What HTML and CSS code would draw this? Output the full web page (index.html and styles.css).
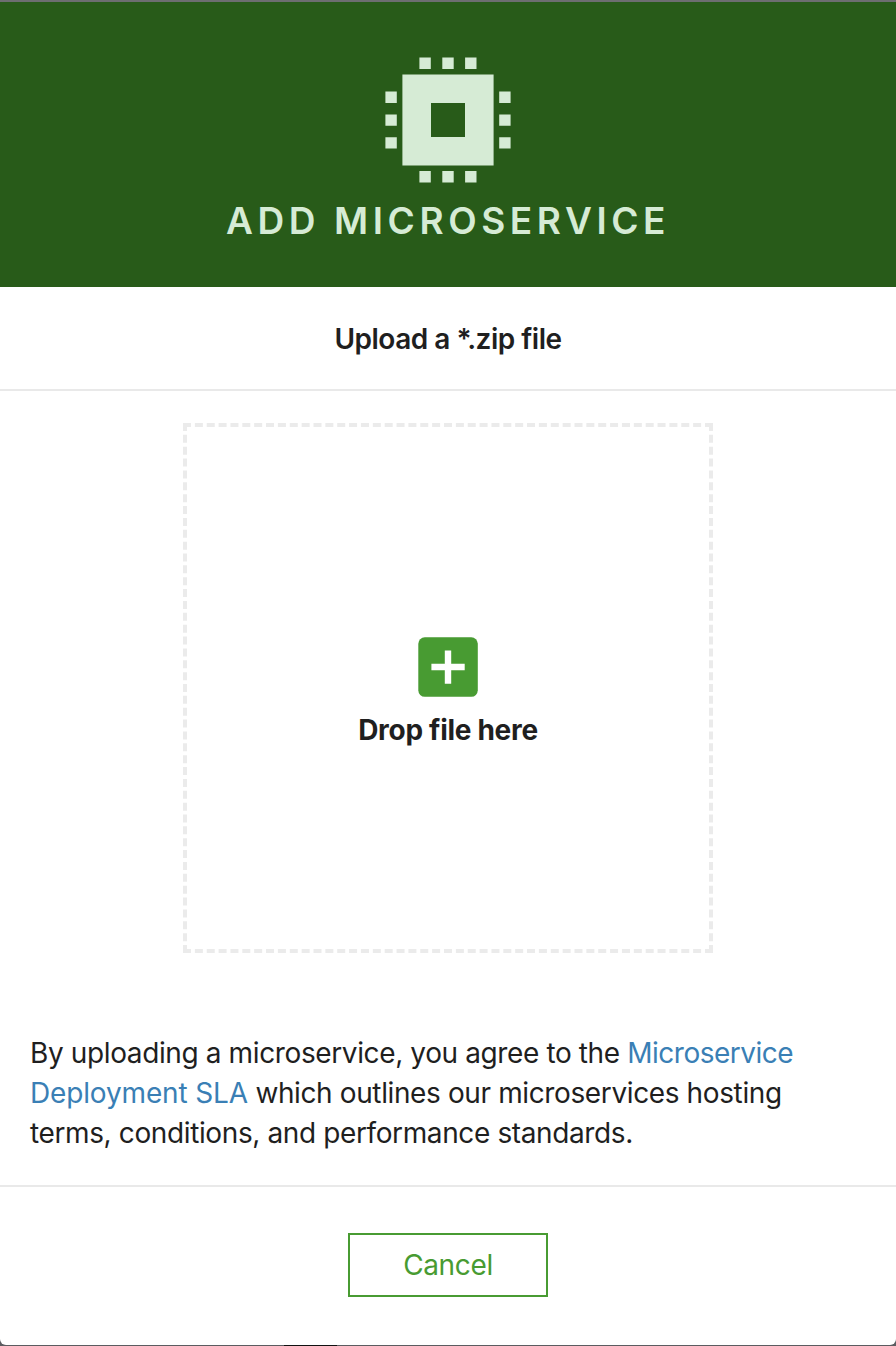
FILE: index.html
```html
<!DOCTYPE html>
<html lang="en">
<head>
<meta charset="utf-8">
<title>Add microservice</title>
<link rel="stylesheet" href="styles.css">
</head>
<body>
<main class="modal">
  <header class="modal-header">
    <svg class="chip-icon" viewBox="0 0 126 126" aria-hidden="true">
      <path fill-rule="evenodd" d="M17.4 17.4h91.2v91.2H17.4zM46 46v34h34V46z"/>
      <path d="M34.4.5h11.4v11.4H34.4zM57.3.5h11.4v11.4H57.3zM80.1.5h11.4v11.4H80.1zM34.4 114.1h11.4v11.4H34.4zM57.3 114.1h11.4v11.4H57.3zM80.1 114.1h11.4v11.4H80.1zM.4 34.6h11.4V46H.4zM.4 57.4h11.4v11.4H.4zM.4 80.2h11.4v11.4H.4zM114.2 34.6h11.4V46h-11.4zM114.2 57.4h11.4v11.4h-11.4zM114.2 80.2h11.4v11.4h-11.4z"/>
    </svg>
    <h1 class="modal-title">ADD MICROSERVICE</h1>
  </header>
  <h2 class="subtitle">Upload a *.zip file</h2>
  <section class="content">
    <div class="dropzone">
      <svg class="plus-icon" viewBox="0 0 60 60" aria-hidden="true">
        <rect class="plus-box" x=".3" y=".3" width="59.5" height="59.5" rx="6.5"/>
        <path class="plus-sign" d="M26.8 13.4h6.4v13.4h13.5v6.4H33.2v13.5h-6.4V33.2H13.4v-6.4h13.4z"/>
      </svg>
      <span class="drop-label">Drop file here</span>
    </div>
    <p class="terms"><span class="line">By uploading a microservice, you agree to the <a class="link link-tight">Microservice</a></span> <span class="line"><a class="link link-loose">Deployment SLA</a> which outlines our microservices hosting</span> <span class="line">terms, conditions, and performance standards.</span></p>
  </section>
  <footer class="modal-footer">
    <button class="cancel" type="button">Cancel</button>
  </footer>
</main>
<div class="backdrop-mark"></div>
</body>
</html>
```
FILE: styles.css
```css
* { box-sizing: border-box; }
body {
  margin: 0;
  height: 1346px;
  padding: 2px 0 1px;
  background: linear-gradient(#6d6e71 0 50%, #5b5c60 50%);
  color: #1f1f1f;
  font-family: Inter, "Liberation Sans", sans-serif;
  font-size: 28px;
  overflow: hidden;
}
.modal {
  height: 1343px;
  display: flex;
  flex-direction: column;
  background: #fff;
  border-radius: 0 0 6px 6px;
  overflow: hidden;
}
.modal-header {
  height: 285px;
  padding-top: 55px;
  display: flex;
  flex-direction: column;
  align-items: center;
  background: #285b19;
  color: #d6ebd5;
}
.chip-icon { width: 126px; height: 126px; fill: currentColor; }
.modal-title {
  margin: 13px 0 0;
  font-size: 37px;
  line-height: 50px;
  font-weight: 600;
  letter-spacing: 4.6px;
  white-space: nowrap;
}
.subtitle {
  height: 104px;
  margin: 0;
  border-bottom: 2px solid #e9e9e9;
  font-size: 28px;
  font-weight: 600;
  line-height: 104px;
  letter-spacing: -0.5px;
  text-align: center;
}
.content {
  height: 796px;
  padding: 32px 30px 0;
  border-bottom: 2px solid #e9e9e9;
}
.dropzone {
  width: 530px;
  height: 530px;
  margin: 0 auto;
  padding-top: 210px;
  display: flex;
  flex-direction: column;
  align-items: center;
  border: 4px dashed #ebebeb;
}
.plus-icon { width: 60px; height: 60px; }
.plus-box { fill: #489b32; }
.plus-sign { fill: #fff; }
.drop-label { margin-top: 13px; line-height: 40px; font-weight: 700; letter-spacing: -0.3px; }
.terms { margin: 80px 0 0; line-height: 40px; letter-spacing: -0.38px; }
.line { display: block; width: max-content; }
.link { color: #3a7fb5; }
.link-tight { letter-spacing: -0.5px; }
.link-loose { letter-spacing: -0.15px; }
.modal-footer {
  flex: 1;
  padding-top: 46px;
  display: flex;
  justify-content: center;
  align-items: flex-start;
}
.cancel {
  width: 200px;
  height: 64px;
  padding: 0;
  border: 2px solid #489b32;
  background: #fff;
  color: #489b32;
  font: inherit;
  letter-spacing: -0.35px;
}
.backdrop-mark { width: 53px; height: 1px; margin-left: 284px; background: #111; }
```
